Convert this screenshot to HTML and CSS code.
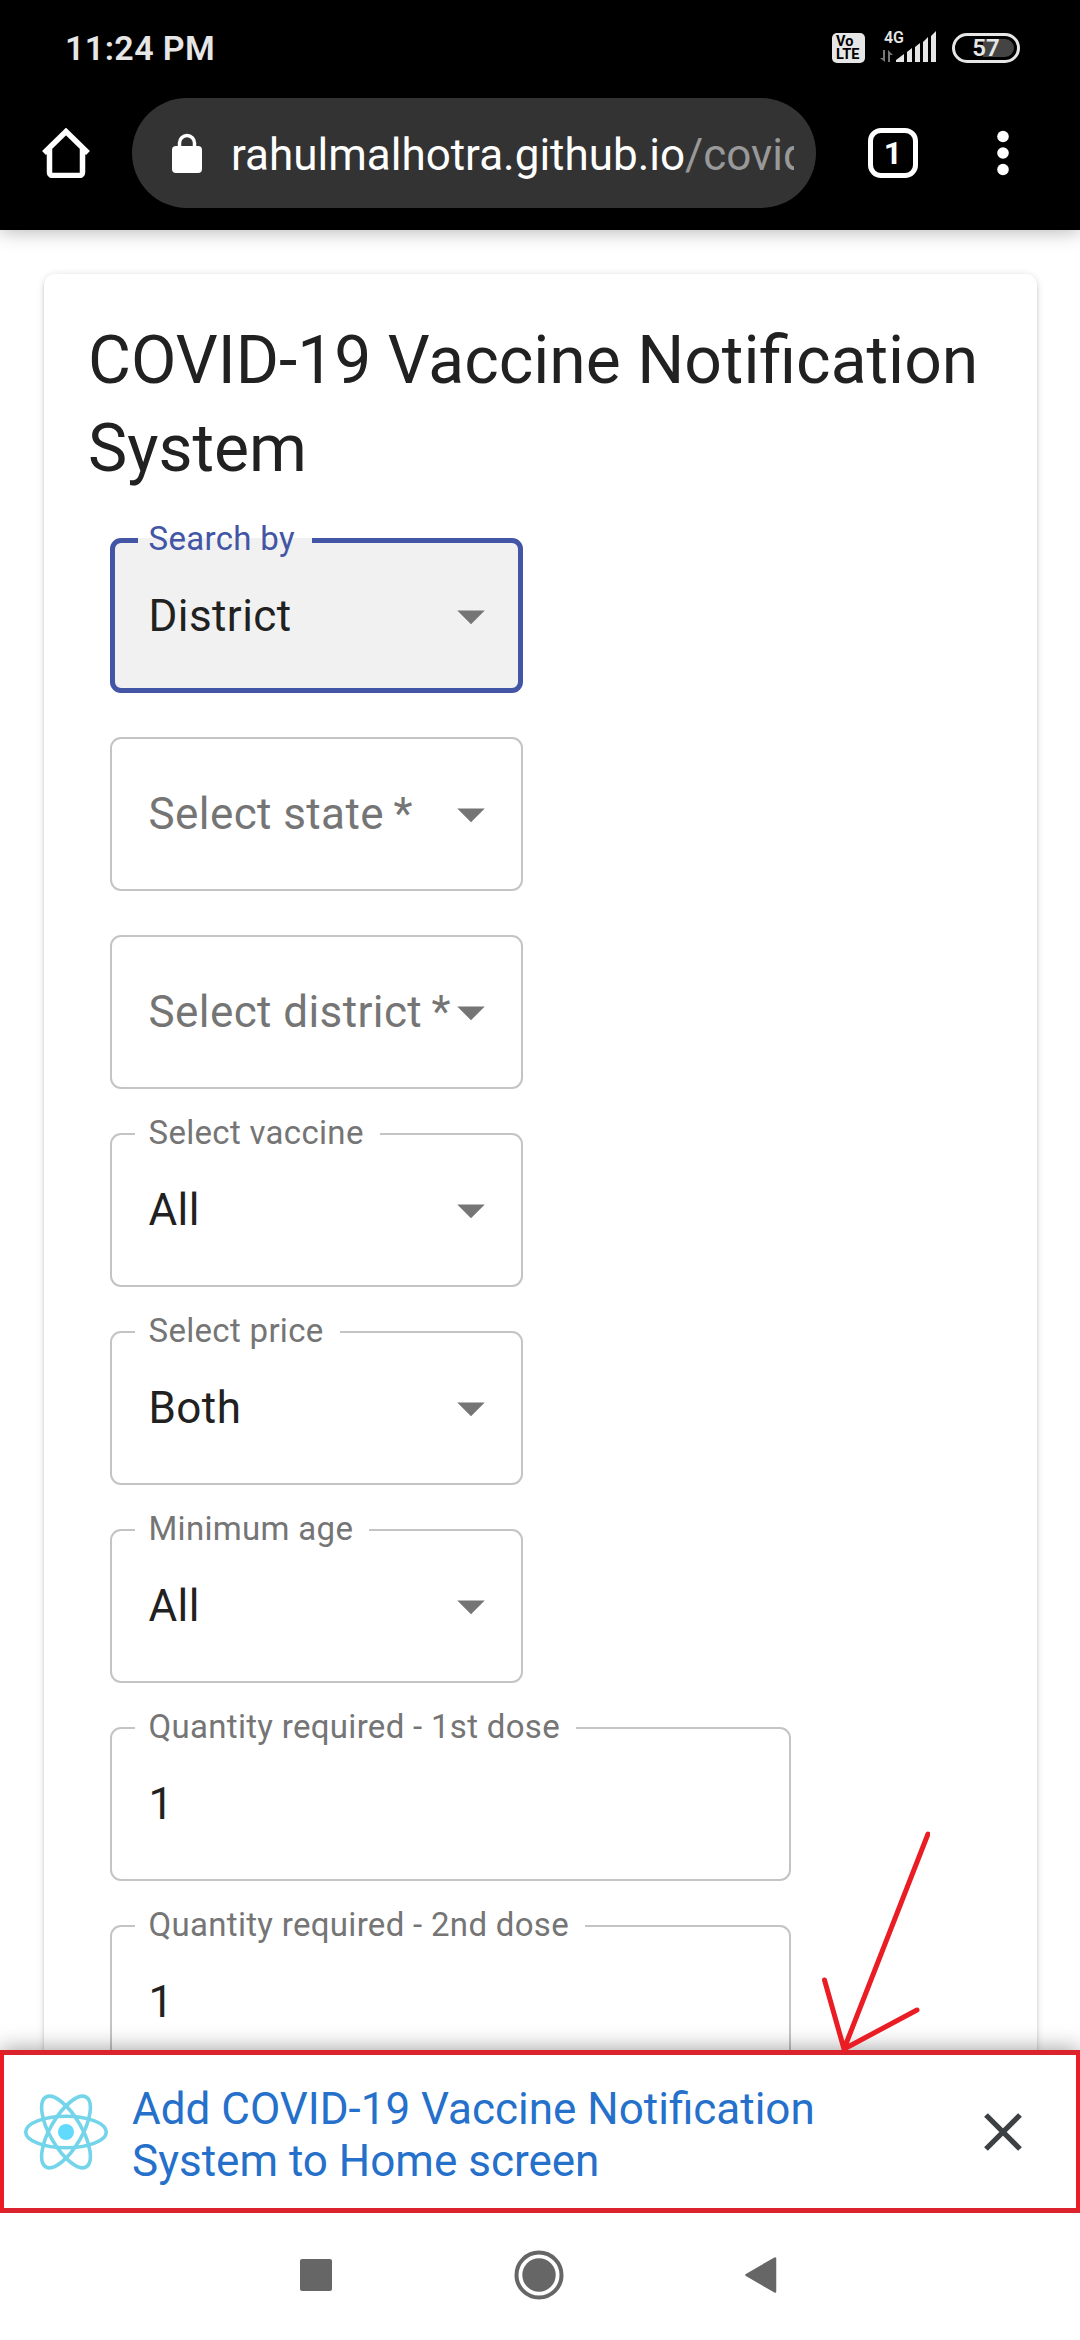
FILE: index.html
```html
<!DOCTYPE html>
<html lang="en">
<head>
<meta charset="utf-8">
<title>COVID-19 Vaccine Notification System</title>
<link rel="stylesheet" href="styles.css">
</head>
<body>
<div class="phone">
  <header class="chrome">
    <div class="status">
      <span class="clock">11:24 PM</span>
      <div class="indicators">
        <div class="volte"><span class="volte-vo">Vo</span><span class="volte-lte">LTE</span></div>
        <svg class="signal" width="58" height="36" viewBox="0 -4 58 36">
          <text class="signal-text" x="5" y="12" textLength="20" lengthAdjust="spacingAndGlyphs">4G</text>
          <path d="M4 19h2v12l-5-4h3z" fill="#777"/>
          <path d="M9 19l5 5h-3v7H9z" fill="#777"/>
          <path d="M17 31v-2l8-6v8zM28 31V21l5-4v14zM36 31V16l5-4v19zM44 31V11l5-5v25zM52 31V5l5-5v31z" fill="#e6e6e6"/>
        </svg>
        <div class="battery"><span class="battery-level">57</span></div>
      </div>
    </div>
    <div class="toolbar">
      <svg class="home" width="50" height="50" viewBox="0 0 50 50">
        <path d="M3 25L25 3.500L47 25M8.500 20v24.500a3 3 0 0 0 3 3h27a3 3 0 0 0 3-3V20" fill="none" stroke="#fff" stroke-width="5.500"/>
      </svg>
      <div class="omnibox">
        <svg class="lock" width="30" height="40" viewBox="0 0 30 40">
          <rect x="0" y="13" width="30" height="27" rx="4" fill="#fff"/>
          <path d="M7.500 14V10a7.500 7.500 0 0 1 15 0v4" fill="none" stroke="#fff" stroke-width="3.500"/>
        </svg>
        <div class="url">rahulmalhotra.github.io<span class="url-path">/covid</span></div>
      </div>
      <div class="tabs">1</div>
      <svg class="menu" width="12" height="46" viewBox="0 0 12 46">
        <circle cx="6" cy="6.500" r="5.800" fill="#fff"/><circle cx="6" cy="23" r="5.800" fill="#fff"/><circle cx="6" cy="39.500" r="5.800" fill="#fff"/>
      </svg>
    </div>
  </header>

  <main class="page">
    <section class="card">
      <h1 class="title">COVID-19 Vaccine Notification System</h1>
      <form class="form">
        <fieldset class="field field-labelled field-focused">
          <legend class="label">Search by</legend>
          <span class="value">District</span>
          <svg class="caret" viewBox="0 0 24 24"><path d="M7 10l5 5 5-5z"/></svg>
        </fieldset>
        <fieldset class="field field-empty">
          <span class="value">Select state<span class="star">&thinsp;*</span></span>
          <svg class="caret" viewBox="0 0 24 24"><path d="M7 10l5 5 5-5z"/></svg>
        </fieldset>
        <fieldset class="field field-empty">
          <span class="value">Select district<span class="star">&thinsp;*</span></span>
          <svg class="caret" viewBox="0 0 24 24"><path d="M7 10l5 5 5-5z"/></svg>
        </fieldset>
        <fieldset class="field field-labelled">
          <legend class="label">Select vaccine</legend>
          <span class="value">All</span>
          <svg class="caret" viewBox="0 0 24 24"><path d="M7 10l5 5 5-5z"/></svg>
        </fieldset>
        <fieldset class="field field-labelled">
          <legend class="label">Select price</legend>
          <span class="value">Both</span>
          <svg class="caret" viewBox="0 0 24 24"><path d="M7 10l5 5 5-5z"/></svg>
        </fieldset>
        <fieldset class="field field-labelled">
          <legend class="label">Minimum age</legend>
          <span class="value">All</span>
          <svg class="caret" viewBox="0 0 24 24"><path d="M7 10l5 5 5-5z"/></svg>
        </fieldset>
        <fieldset class="field field-labelled field-wide">
          <legend class="label">Quantity required - 1st dose</legend>
          <span class="value">1</span>
        </fieldset>
        <fieldset class="field field-labelled field-wide">
          <legend class="label">Quantity required - 2nd dose</legend>
          <span class="value">1</span>
        </fieldset>
      </form>
    </section>
  </main>

  <aside class="install">
    <svg class="react" width="86" height="78" viewBox="-43 -39 86 78">
      <g fill="none" stroke="#74d4ea" stroke-width="3.600">
        <ellipse rx="40.300" ry="15.800"/>
        <ellipse rx="40.300" ry="15.800" transform="rotate(60)"/>
        <ellipse rx="40.300" ry="15.800" transform="rotate(120)"/>
      </g>
      <circle r="8" fill="#61dafb"/>
    </svg>
    <p class="install-text">Add COVID-19 Vaccine Notification System to Home screen</p>
    <svg class="close" width="38" height="38" viewBox="0 0 38 38">
      <path d="M2 2l34 34M36 2L2 36" stroke="#3c4043" stroke-width="5.300"/>
    </svg>
  </aside>

  <nav class="navbar">
    <svg width="32" height="32" viewBox="0 0 32 32"><rect width="32" height="32" rx="2" fill="#666"/></svg>
    <svg width="50" height="50" viewBox="0 0 50 50"><circle cx="25" cy="25" r="22.500" fill="none" stroke="#666" stroke-width="4"/><circle cx="25" cy="25" r="16.700" fill="#666"/></svg>
    <svg width="32" height="36" viewBox="0 0 32 36"><path d="M30 1.500v33L1.500 18z" fill="#666" stroke="#666" stroke-width="2.500" stroke-linejoin="round"/></svg>
  </nav>

  <svg class="pointer" width="110" height="224" viewBox="0 0 110 224">
    <path d="M108 4L24 219M4.500 150L24 219L97 180" fill="none" stroke="#ea1c24" stroke-width="5" stroke-linecap="round"/>
  </svg>
</div>
</body>
</html>
```
FILE: styles.css
```css
body {
  margin: 0;
  font-family: Roboto, "Noto Sans", sans-serif;
  background: #fff;
}
svg { display: block; flex: none; }
.phone {
  position: relative;
  width: 1080px;
  height: 2340px;
  display: flex;
  flex-direction: column;
  overflow: hidden;
}

/* Browser chrome */
.chrome {
  height: 230px;
  flex: none;
  background: #000;
  color: #fff;
  z-index: 1;
  box-shadow: 0 2px 18px rgba(0, 0, 0, 0.28);
}
.status {
  height: 96px;
  display: flex;
  justify-content: space-between;
  align-items: center;
  padding: 0 60px 0 65px;
  box-sizing: border-box;
}
.clock {
  font-size: 34px;
  font-weight: 600;
  letter-spacing: 0.4px;
  color: #e6e6e6;
}
.indicators { display: flex; align-items: center; }
.volte {
  width: 33px;
  height: 30px;
  border-radius: 5px;
  background: #e6e6e6;
  color: #000;
  font-size: 14.5px;
  font-weight: 700;
  line-height: 13px;
  display: flex;
  flex-direction: column;
  justify-content: center;
  padding-left: 4px;
  box-sizing: border-box;
  margin-right: 14px;
}
.signal { margin: 0 15px 6px 0; }
.signal-text { font-size: 16px; font-weight: 600; fill: #e6e6e6; }
.battery {
  width: 68px;
  height: 30px;
  box-sizing: border-box;
  border: 3px solid #e6e6e6;
  border-radius: 15px;
  padding: 3px;
}
.battery-level {
  display: block;
  height: 18px;
  border-radius: 9px;
  background: linear-gradient(90deg, transparent 44%, #444 44%);
  color: #e6e6e6;
  font-size: 24px;
  font-weight: 600;
  line-height: 18px;
  text-align: center;
}
.toolbar {
  height: 114px;
  display: flex;
  align-items: center;
  padding-left: 41px;
}
.omnibox {
  width: 684px;
  height: 110px;
  box-sizing: border-box;
  margin: 0 52px 0 41px;
  padding: 0 22px 0 40px;
  border-radius: 55px;
  background: #333;
  display: flex;
  align-items: center;
}
.url {
  margin-left: 29px;
  padding-top: 4px;
  flex: 1;
  font-size: 44px;
  line-height: 60px;
  white-space: nowrap;
  overflow: hidden;
}
.url-path { color: #999; }
.tabs {
  width: 50px;
  height: 50px;
  box-sizing: border-box;
  border: 5.500px solid #fff;
  border-radius: 13px;
  font-size: 32px;
  font-weight: 700;
  line-height: 41px;
  text-align: center;
}
.menu { margin-left: 79px; }

/* Form page */
.page {
  flex: 1;
  min-height: 0;
  padding: 44px 43px 0 44px;
  overflow: hidden;
}
.card {
  height: 1900px;
  box-sizing: border-box;
  padding: 43px 44px 0;
  border-radius: 11px;
  background: #fff;
  box-shadow: 0 3px 3px rgba(0, 0, 0, 0.12), 0 1px 7px rgba(0, 0, 0, 0.15);
}
.title {
  margin: 0;
  font-size: 66px;
  font-weight: 400;
  line-height: 88px;
  color: #212121;
}
.form { padding: 25px 22px 0; }
.field {
  display: flex;
  align-items: center;
  justify-content: space-between;
  box-sizing: border-box;
  width: 413px;
  min-width: 0;
  margin: 0 0 24px;
  padding: 0 17px 0 23px;
  border: 2px solid #c4c4c4;
  border-radius: 11px;
  color: #212121;
}
.field-labelled {
  height: 174px;
  padding-bottom: 20px;
}
.field-wide { width: 681px; }
.field-empty {
  height: 154px;
  margin-top: 44px;
  color: #757575;
}
.field-focused {
  height: 175px;
  padding-right: 14px;
  border: 5px solid #4355a5;
  background: #f1f1f1;
}
.label {
  padding: 0 16px 2px 13.5px;
  font-size: 33px;
  line-height: 40px;
  letter-spacing: 0.31px;
  color: #757575;
}
.field-focused .label {
  padding: 1px 17px 4px 10.5px;
  color: #4355a5;
}
.value {
  margin-left: 13.5px;
  font-size: 44px;
  line-height: 52px;
  letter-spacing: 0.41px;
  white-space: nowrap;
}
.field-focused .value { margin-left: 10.5px; }
.caret {
  width: 66px;
  height: 66px;
  margin-left: -20px;
  fill: #757575;
}

/* Install banner */
.install {
  height: 163px;
  flex: none;
  box-sizing: border-box;
  display: flex;
  align-items: center;
  padding: 0 54px 0 19px;
  border: solid;
  border-width: 5px 4px;
  border-color: #da232c #ed1c24;
  background: #fff;
  box-shadow: 0 0 22px rgba(0, 0, 0, 0.4);
  z-index: 1;
}
.install-text {
  flex: 1;
  margin: 6px 150px 0 23px;
  font-size: 44px;
  line-height: 52px;
  color: #2470ca;
}
.navbar {
  height: 127px;
  flex: none;
  display: flex;
  align-items: center;
  justify-content: space-between;
  padding: 0 303px 3px 300px;
  box-sizing: border-box;
  background: #fff;
  z-index: 2;
}
.pointer {
  position: absolute;
  left: 820px;
  top: 1830px;
  z-index: 3;
}
```
